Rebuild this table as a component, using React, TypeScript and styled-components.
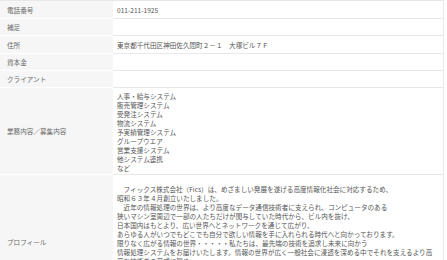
import styled, { createGlobalStyle } from "styled-components";

const GlobalStyle = createGlobalStyle`
  html, body {
    margin: 0;
    padding: 0;
    background: #fff;
  }
  body {
    font-family: "Noto Sans CJK JP", "Noto Sans", sans-serif;
    color: #555;
  }
`;

const Table = styled.div`
  width: 444px;
  border-top: 1px solid #e8e8e8;
  border-right: 1px solid #e8e8e8;
  box-sizing: border-box;
`;

const Row = styled.div`
  display: grid;
  grid-template-columns: 113px 1fr;
`;

const Label = styled.div`
  display: flex;
  align-items: center;
  padding: 1px 7px 0;
  background: #f6f6f6;
  border-bottom: 1px solid #fff;
  font-size: 6.6px;
  line-height: 9px;
  color: #6a6a6a;
`;

const Value = styled.div<{ $padTop?: number; $padBottom?: number }>`
  min-height: 17px;
  box-sizing: border-box;
  padding: ${(p) => p.$padTop ?? 4}px 6px ${(p) => p.$padBottom ?? 4}px 4px;
  border-bottom: 1px solid #e8e8e8;
  font-size: 6.6px;
  line-height: 9px;
  color: #555;
`;

const Line = styled.div``;

const Indent = styled.span`
  padding-left: 6.6px;
`;

const works = [
  "人事・給与システム",
  "販売管理システム",
  "受発注システム",
  "物流システム",
  "予実績管理システム",
  "グループウエア",
  "営業支援システム",
  "他システム連携",
  "など",
];

export default function App() {
  return (
    <>
      <GlobalStyle />
      <Table>
        <Row>
          <Label>電話番号</Label>
          <Value $padTop={5} $padBottom={3}>011-211-1925</Value>
        </Row>
        <Row>
          <Label>補足</Label>
          <Value />
        </Row>
        <Row>
          <Label>住所</Label>
          <Value $padTop={5} $padBottom={3}>東京都千代田区神田佐久間町２－１　大塚ビル７Ｆ</Value>
        </Row>
        <Row>
          <Label>資本金</Label>
          <Value />
        </Row>
        <Row>
          <Label>クライアント</Label>
          <Value />
        </Row>
        <Row>
          <Label>業務内容／募集内容</Label>
          <Value $padTop={4} $padBottom={1}>
            {works.map((w) => (
              <Line key={w}>{w}</Line>
            ))}
          </Value>
        </Row>
        <Row>
          <Label>プロフィール</Label>
          <Value $padTop={10} $padBottom={7}>
            <Line>
              <Indent />
              フィックス株式会社（Fics）は、めざましい発展を遂げる高度情報化社会に対応するため、
            </Line>
            <Line>昭和６３年４月創立いたしました。</Line>
            <Line>
              <Indent />
              近年の情報処理の世界は、より高度なデータ通信技術者に支えられ、コンピュータのある
            </Line>
            <Line>狭いマシン室周辺で一部の人たちだけが関与していた時代から、ビル内を抜け、</Line>
            <Line>日本国内はもとより、広い世界へとネットワークを通じて広がり、</Line>
            <Line>あらゆる人がいつでもどこでも自分で欲しい情報を手に入れられる時代へと向かっております。</Line>
            <Line>限りなく広がる情報の世界・・・・・私たちは、最先端の技術を追求し未来に向かう</Line>
            <Line>
              情報処理システムをお届けいたします。情報の世界が広く一般社会に浸透を深める中でそれを支えるより高度な技術者の育成に努め、
            </Line>
            <Line>お客様のニーズにお応えできるシステムづくりを目指してまいります。</Line>
            <Line>
              <Indent />
              私たちは、常に新しい技術に挑戦し、
            </Line>
            <Line>お客様とともに成長していく企業でありたいと考えております。</Line>
            <Line>今後とも、より一層のご支援を賜りますようお願い申し上げます。</Line>
          </Value>
        </Row>
      </Table>
    </>
  );
}
